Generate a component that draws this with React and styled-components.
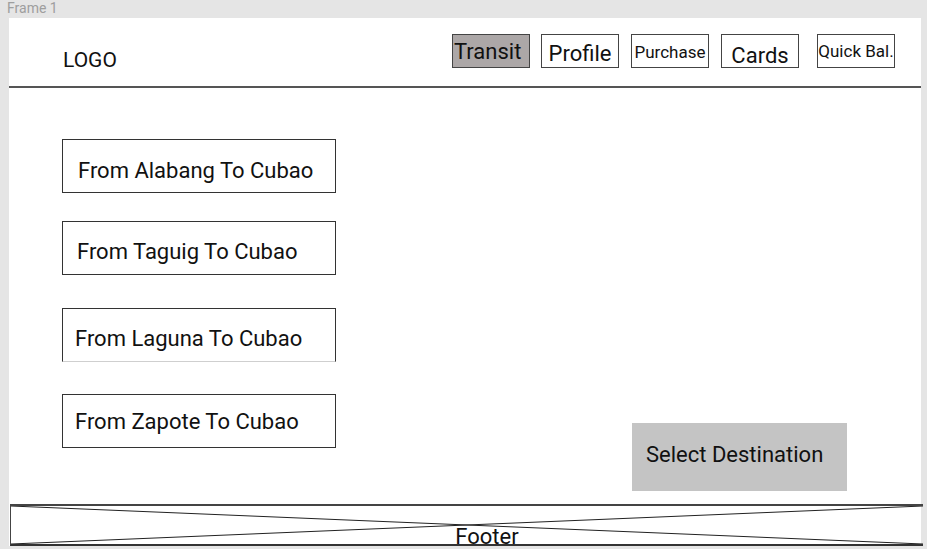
import React from 'react'
import styled, { createGlobalStyle } from 'styled-components'

const Global = createGlobalStyle`
    html, body {
        margin: 0;
        padding: 0;
        background: #e5e5e5;
        font-family: Roboto, "Liberation Sans", sans-serif;
        overflow: hidden;
    }
`

const Canvas = styled.div`
    width: 927px;
    height: 549px;
    padding-left: 9px;
    box-sizing: border-box;
`

const FrameLabel = styled.div`
    height: 18px;
    font-size: 14px;
    line-height: 17px;
    color: #9e9e9e;
    margin-left: -2px;
`

const Frame = styled.div`
    width: 912px;
    height: 528px;
    background: white;
    display: flex;
    flex-direction: column;
`

const Header = styled.div`
    height: 70px;
    border-bottom: 2px solid #555;
    display: flex;
    align-items: flex-start;
    padding: 16px 0 0 54px;
    box-sizing: border-box;
    flex: none;
`

const Logo = styled.div`
    font-size: 21px;
    line-height: 25px;
    margin-top: 14px;
    color: #111;
`

const Nav = styled.div`
    margin-left: auto;
    margin-right: 26px;
    display: flex;
`

const NavButton = styled.div`
    width: 78px;
    height: 34px;
    box-sizing: border-box;
    border: 1px solid #444;
    background: ${p => p.$active ? '#aca7a7' : 'white'};
    margin-left: ${p => p.$ml || 0}px;
    font-size: ${p => p.$size}px;
    line-height: 1;
    padding-top: ${p => p.$pt}px;
    text-align: ${p => p.$active ? 'left' : 'center'};
    padding-left: ${p => p.$active ? 1 : 0}px;
    white-space: nowrap;
    color: #111;
`

const Main = styled.div`
    flex: 1;
    display: flex;
    justify-content: space-between;
    padding: 51px 74px 13px 53px;
    box-sizing: border-box;
`

const Routes = styled.div`
    display: flex;
    flex-direction: column;
`

const Route = styled.div`
    width: 274px;
    height: 54px;
    box-sizing: border-box;
    border: 1px solid #333;
    border-bottom-color: ${p => p.$open ? '#cfcfcf' : '#333'};
    margin-top: ${p => p.$mt || 0}px;
    padding: ${p => p.$pt || 0}px 0 0 ${p => p.$pl}px;
    display: flex;
    align-items: center;
    font-size: 22px;
    color: #111;
`

const SelectButton = styled.div`
    align-self: flex-end;
    width: 215px;
    height: 68px;
    background: #c4c4c4;
    display: flex;
    align-items: center;
    padding: 0 0 5px 14px;
    box-sizing: border-box;
    font-size: 22px;
    color: #111;
`

const Footer = styled.div`
    position: relative;
    height: 42px;
    margin-left: 1px;
    width: 913px;
    box-sizing: border-box;
    border-top: 2px solid #444;
    border-bottom: 2px solid #333;
    border-left: 1px solid #444;
    flex: none;
    display: flex;
    justify-content: center;
    align-items: flex-end;
`

const Cross = styled.svg`
    position: absolute;
    inset: 0;
    width: 100%;
    height: 100%;
`

const FooterText = styled.div`
    position: relative;
    font-size: 22px;
    line-height: 1;
    margin-bottom: -4px;
    margin-left: 40px;
    color: #111;
`

export default function App() {
    return (
        <Canvas>
            <Global />
            <FrameLabel>Frame 1</FrameLabel>
            <Frame>
                <Header>
                    <Logo>LOGO</Logo>
                    <Nav>
                        <NavButton $active $size={22} $pt={6}>Transit</NavButton>
                        <NavButton $ml={11} $size={22} $pt={8}>Profile</NavButton>
                        <NavButton $ml={12} $size={17} $pt={9}>Purchase</NavButton>
                        <NavButton $ml={12} $size={22} $pt={10}>Cards</NavButton>
                        <NavButton $ml={18} $size={17} $pt={8}>Quick Bal.</NavButton>
                    </Nav>
                </Header>
                <Main>
                    <Routes>
                        <Route $pl={15} $pt={8}>From Alabang To Cubao</Route>
                        <Route $mt={28} $pl={14} $pt={6}>From Taguig To Cubao</Route>
                        <Route $mt={33} $pl={12} $pt={6} $open>From Laguna To Cubao</Route>
                        <Route $mt={32} $pl={12} $pt={0}>From Zapote To Cubao</Route>
                    </Routes>
                    <SelectButton>Select Destination</SelectButton>
                </Main>
                <Footer>
                    <Cross viewBox="0 0 100 10" preserveAspectRatio="none">
                        <line x1="0" y1="0" x2="100" y2="10" stroke="#222" strokeWidth="1" vectorEffect="non-scaling-stroke" />
                        <line x1="0" y1="10" x2="100" y2="0" stroke="#222" strokeWidth="1" vectorEffect="non-scaling-stroke" />
                    </Cross>
                    <FooterText>Footer</FooterText>
                </Footer>
            </Frame>
        </Canvas>
    )
}
